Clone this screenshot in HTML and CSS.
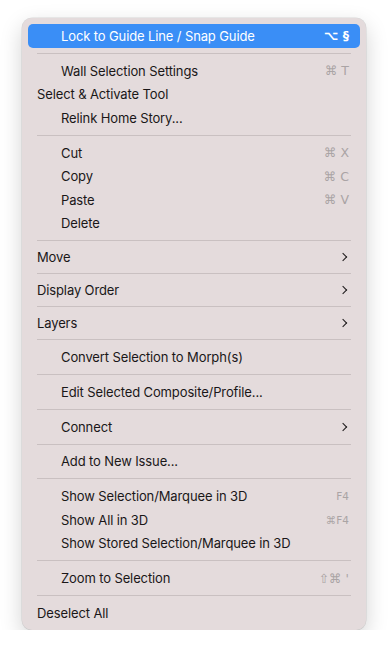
FILE: index.html
```html
<!DOCTYPE html>
<html lang="en">
<head>
  <meta charset="UTF-8">
  <meta name="viewport" content="width=device-width, initial-scale=1.0">
  <title>Context Menu</title>
  <link rel="stylesheet" href="styles.css">
</head>
<body>
  <div class="menu">
    <div class="item active indent"><span class="label">Lock to Guide Line / Snap Guide</span><span class="keys">⌥ §</span></div>
    <div class="sep"></div>
    <div class="item indent"><span class="label">Wall Selection Settings</span><span class="keys">⌘ T</span></div>
    <div class="item"><span class="label">Select &amp; Activate Tool</span></div>
    <div class="item indent"><span class="label">Relink Home Story...</span></div>
    <div class="sep"></div>
    <div class="item indent"><span class="label">Cut</span><span class="keys">⌘ X</span></div>
    <div class="item indent"><span class="label">Copy</span><span class="keys">⌘ C</span></div>
    <div class="item indent"><span class="label">Paste</span><span class="keys">⌘ V</span></div>
    <div class="item indent"><span class="label">Delete</span></div>
    <div class="sep"></div>
    <div class="item short"><span class="label">Move</span><span class="arrow"></span></div>
    <div class="sep"></div>
    <div class="item short"><span class="label">Display Order</span><span class="arrow"></span></div>
    <div class="sep"></div>
    <div class="item short"><span class="label">Layers</span><span class="arrow"></span></div>
    <div class="sep"></div>
    <div class="item indent"><span class="label">Convert Selection to Morph(s)</span></div>
    <div class="sep"></div>
    <div class="item indent"><span class="label">Edit Selected Composite/Profile...</span></div>
    <div class="sep"></div>
    <div class="item indent"><span class="label">Connect</span><span class="arrow"></span></div>
    <div class="sep"></div>
    <div class="item indent"><span class="label">Add to New Issue...</span></div>
    <div class="sep"></div>
    <div class="item indent"><span class="label">Show Selection/Marquee in 3D</span><span class="keys small">F4</span></div>
    <div class="item indent"><span class="label">Show All in 3D</span><span class="keys small">⌘F4</span></div>
    <div class="item indent"><span class="label">Show Stored Selection/Marquee in 3D</span></div>
    <div class="sep"></div>
    <div class="item indent"><span class="label">Zoom to Selection</span><span class="keys">⇧⌘ '</span></div>
    <div class="sep"></div>
    <div class="item"><span class="label">Deselect All</span></div>
  </div>
</body>
</html>
```

FILE: styles.css
```css
body {
  margin: 0;
  background: #ffffff;
  font-family: Inter, "Liberation Sans", sans-serif;
}
.menu {
  width: 344px;
  margin: 18px auto 0;
  padding: 6px 6px 5px;
  box-sizing: border-box;
  background: #e4dbdc;
  border-radius: 10px;
  box-shadow: 0 0 0 0.5px rgba(0, 0, 0, 0.12), 0 8px 22px rgba(0, 0, 0, 0.18);
}
.item {
  display: flex;
  align-items: center;
  height: 23.6px;
  padding: 0 11px 0 9px;
  border-radius: 5px;
  font-size: 13px;
  letter-spacing: -0.12px;
  color: #1a1718;
}
.item.short {
  height: 21.8px;
}
.item.indent .label {
  padding-left: 24px;
}
.label {
  flex: 1;
  white-space: nowrap;
}
.item.active {
  background: #3a8ef6;
  color: #ffffff;
}
.keys {
  color: #aaa4a5;
  font-family: "DejaVu Sans", Inter, sans-serif;
  font-size: 12.5px;
  letter-spacing: 0;
}
.item.active .keys {
  color: #ffffff;
  font-weight: bold;
}
.keys.small {
  font-size: 10.5px;
}
.arrow {
  width: 5px;
  height: 5px;
  margin-right: 3px;
  border-top: 1.6px solid #1a1718;
  border-right: 1.6px solid #1a1718;
  transform: rotate(45deg);
}
.sep {
  height: 1px;
  margin: 5.1px 9px;
  background: #c9c0c1;
}
```
